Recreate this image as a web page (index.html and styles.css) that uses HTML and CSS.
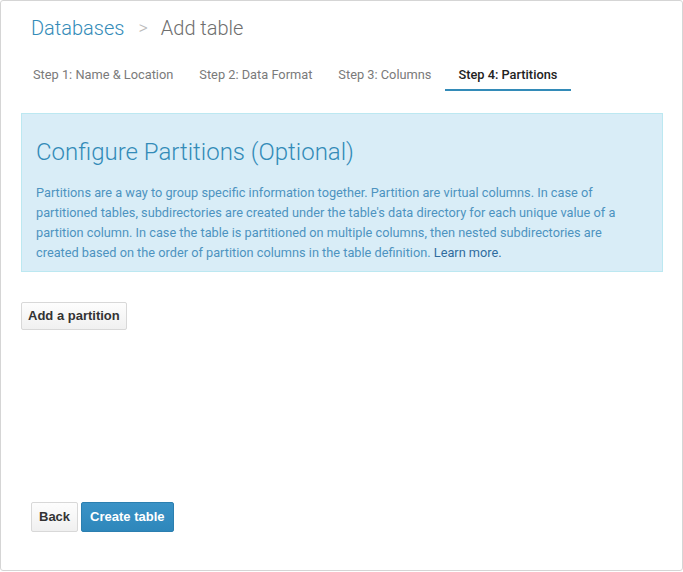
FILE: index.html
```html
<!DOCTYPE html>
<html>
<head>
<meta charset="utf-8">
<link rel="stylesheet" href="styles.css">
</head>
<body>
<div class="page">
  <h1 class="crumbs"><a class="crumb-link">Databases</a><span class="sep">&gt;</span><span class="crumb-current">Add table</span></h1>
  <ul class="tabs">
    <li class="tab">Step 1: Name &amp; Location</li>
    <li class="tab">Step 2: Data Format</li>
    <li class="tab">Step 3: Columns</li>
    <li class="tab active">Step 4: Partitions</li>
  </ul>
  <div class="content">
    <div class="alert">
      <h3 class="alert-title">Configure Partitions (Optional)</h3>
      <p class="alert-text">Partitions are a way to group specific information together. Partition are virtual columns. In case of partitioned tables, subdirectories are created under the table's data directory for each unique value of a partition column. In case the table is partitioned on multiple columns, then nested subdirectories are created based on the order of partition columns in the table definition. <a class="learn">Learn more.</a></p>
    </div>
    <button class="btn">Add a partition</button>
  </div>
  <div class="footer">
    <button class="btn btn-sm">Back</button>
    <button class="btn btn-primary">Create table</button>
  </div>
</div>
</body>
</html>
```

FILE: styles.css
```css
html, body {
  margin: 0;
  padding: 0;
  background: #fff;
}
.page {
  box-sizing: border-box;
  width: 683px;
  height: 571px;
  border: 1px solid #d5d5d5;
  border-radius: 3px;
  display: flex;
  flex-direction: column;
  font-family: Roboto, "Helvetica Neue", Arial, sans-serif;
}
.crumbs {
  margin: 0;
  padding: 14px 0 0 30px;
  font-size: 20px;
  line-height: 26px;
  font-weight: 300;
  display: flex;
}
.crumb-link {
  color: #338bb8;
}
.sep {
  color: #bbb;
  margin: 0 13px 0 14px;
  font-size: 18px;
}
.crumb-current {
  color: #6e6e6e;
}
.tabs {
  list-style: none;
  margin: 14px 0 0 20px;
  padding: 0;
  display: flex;
  gap: 2px;
}
.tab {
  font-size: 12.8px;
  line-height: 18px;
  padding: 11px 12px 5px;
  color: #7a7a7a;
  border-bottom: 2px solid transparent;
}
.tab.active {
  color: #222;
  font-weight: 500;
  padding-left: 13px;
  padding-right: 14px;
  border-bottom-color: #338bb8;
}
.content {
  padding: 22px 19px 0 20px;
}
.alert {
  background: #d9edf7;
  border: 1px solid #bce8f1;
  color: #3a87ad;
  padding: 8px 35px 8px 14px;
}
.alert-title {
  margin: 15px 0 16px;
  font-size: 24px;
  line-height: 30px;
  font-weight: 300;
  color: #338bb8;
}
.alert-text {
  margin: 0;
  font-size: 12.75px;
  line-height: 20px;
  color: #4d93c0;
}
.learn {
  color: #2f6c9e;
}
.btn {
  font-family: "Liberation Sans", Arial, sans-serif;
  font-size: 13px;
  font-weight: bold;
  line-height: 18px;
  color: #333;
  padding: 4px 6px;
  border: 1px solid #d8d8d8;
  border-radius: 2px;
  background: linear-gradient(#fdfdfd, #f0f0f0);
  margin-top: 30px;
  align-self: flex-start;
}
.footer {
  margin-top: auto;
  padding: 0 0 38px 30px;
  display: flex;
  gap: 3px;
}
.footer .btn {
  margin-top: 0;
  height: 30px;
}
.btn-sm {
  padding: 4px 7px;
}
.btn-primary {
  color: #fff;
  padding: 4px 8px;
  background: linear-gradient(#3a92c6, #2e87bb);
  border-color: #2b7fb0;
}
```
